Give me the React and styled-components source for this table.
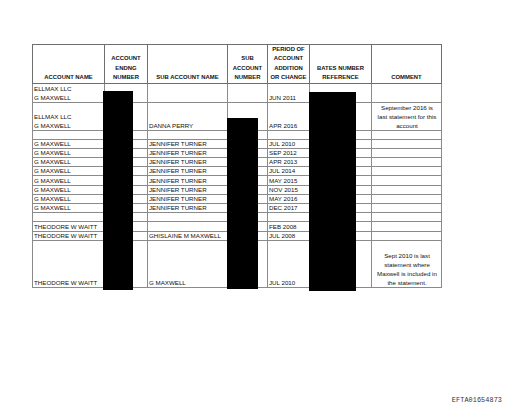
import styled, { createGlobalStyle } from "styled-components";

const GlobalStyle = createGlobalStyle`
  html, body {
    margin: 0;
    padding: 0;
    background: #ffffff;
  }
`;

const Page = styled.div`
  width: 512px;
  height: 407px;
  box-sizing: border-box;
  padding: 44px 0 0 32px;
  display: flex;
  flex-direction: column;
  font-family: "Liberation Sans", Arial, sans-serif;
  color: #111;
`;

const TableWrap = styled.div`
  position: relative;
  width: 409px;
`;

const Table = styled.table`
  border-collapse: collapse;
  table-layout: fixed;
  width: 409px;
  border: 1px solid #6e6e6e;
`;

const HeadCell = styled.th`
  border: 1px solid #6e6e6e;
  font-size: 5.9px;
  font-weight: 700;
  line-height: 9.3px;
  text-align: center;
  vertical-align: bottom;
  padding: 0 0 1px 0;
  white-space: pre-line;
`;

const Row = styled.tr`
  height: ${(p) => p.$h}px;
`;

const Cell = styled.td`
  border: 1px solid #8a8a8a;
  font-size: 6.2px;
  line-height: ${(p) => (p.$tall ? "9px" : "8px")};
  text-align: ${(p) => (p.$center ? "center" : "left")};
  vertical-align: bottom;
  padding: 0 0 0 1px;
  white-space: pre-line;
  overflow: hidden;
`;

const Redaction = styled.div`
  position: absolute;
  background: #000;
  left: ${(p) => p.$x}px;
  top: ${(p) => p.$y}px;
  width: ${(p) => p.$w}px;
  height: ${(p) => p.$h}px;
`;

const Footer = styled.div`
  margin-top: auto;
  display: flex;
  justify-content: flex-end;
  padding: 0 10px 3px 0;
  font-family: "Liberation Mono", "Courier New", monospace;
  font-size: 6.8px;
  letter-spacing: 0.1px;
  color: #333;
`;

const cols = [72, 43, 80, 40, 42, 62, 70];

const headers = [
  "ACCOUNT NAME",
  "ACCOUNT\nENDNG\nNUMBER",
  "SUB ACCOUNT NAME",
  "SUB\nACCOUNT\nNUMBER",
  "PERIOD OF\nACCOUNT\nADDITION\nOR CHANGE",
  "BATES NUMBER\nREFERENCE",
  "COMMENT",
];

const rows = [
  { h: 19, name: "ELLMAX LLC\nG MAXWELL", sub: "", period: "JUN 2011", comment: "" },
  {
    h: 28,
    name: "ELLMAX LLC\nG MAXWELL",
    sub: "DANNA PERRY",
    period: "APR 2016",
    comment: "September 2016  is\nlast statement for this\naccount",
  },
  { h: 8.5, name: "", sub: "", period: "", comment: "" },
  { h: 9.2, name: "G MAXWELL", sub: "JENNIFER TURNER", period: "JUL 2010", comment: "" },
  { h: 9.2, name: "G MAXWELL", sub: "JENNIFER TURNER", period: "SEP 2012", comment: "" },
  { h: 9.2, name: "G MAXWELL", sub: "JENNIFER TURNER", period: "APR 2013", comment: "" },
  { h: 9.2, name: "G MAXWELL", sub: "JENNIFER TURNER", period: "JUL 2014", comment: "" },
  { h: 9.2, name: "G MAXWELL", sub: "JENNIFER TURNER", period: "MAY 2015", comment: "" },
  { h: 9.2, name: "G MAXWELL", sub: "JENNIFER TURNER", period: "NOV 2015", comment: "" },
  { h: 9.2, name: "G MAXWELL", sub: "JENNIFER TURNER", period: "MAY 2016", comment: "" },
  { h: 9.2, name: "G MAXWELL", sub: "JENNIFER TURNER", period: "DEC 2017", comment: "" },
  { h: 9.2, name: "", sub: "", period: "", comment: "" },
  { h: 9.2, name: "THEODORE W WAITT", sub: "", period: "FEB 2008", comment: "" },
  { h: 9.2, name: "THEODORE W WAITT", sub: "GHISLAINE M MAXWELL", period: "JUL 2008", comment: "" },
  {
    h: 47.5,
    name: "THEODORE W WAITT",
    sub: "G MAXWELL",
    period: "JUL 2010",
    comment: "Sept 2010 is last\nstatement where\nMaxwell is included in\nthe statement.",
  },
];

const App = () => {
  return (
    <>
      <GlobalStyle />
      <Page>
        <TableWrap>
          <Table>
            <colgroup>
              {cols.map((w, i) => (
                <col key={i} style={{ width: w }} />
              ))}
            </colgroup>
            <thead>
              <Row $h={37}>
                {headers.map((h) => (
                  <HeadCell key={h}>{h}</HeadCell>
                ))}
              </Row>
            </thead>
            <tbody>
              {rows.map((r, i) => {
                const tall = r.h > 15;
                return (
                  <Row key={i} $h={r.h}>
                    <Cell $tall={tall}>{r.name}</Cell>
                    <Cell />
                    <Cell $tall={tall}>{r.sub}</Cell>
                    <Cell />
                    <Cell $tall={tall}>{r.period}</Cell>
                    <Cell />
                    <Cell $tall={tall} $center>
                      {r.comment}
                    </Cell>
                  </Row>
                );
              })}
            </tbody>
          </Table>

          {/* redacted blocks */}
          <Redaction $x={71} $y={47} $w={30} $h={199} />
          <Redaction $x={195} $y={74} $w={31} $h={171} />
          <Redaction $x={277} $y={48} $w={47} $h={199} />
        </TableWrap>
        <Footer>EFTA01654873</Footer>
      </Page>
    </>
  );
};

export default App;
